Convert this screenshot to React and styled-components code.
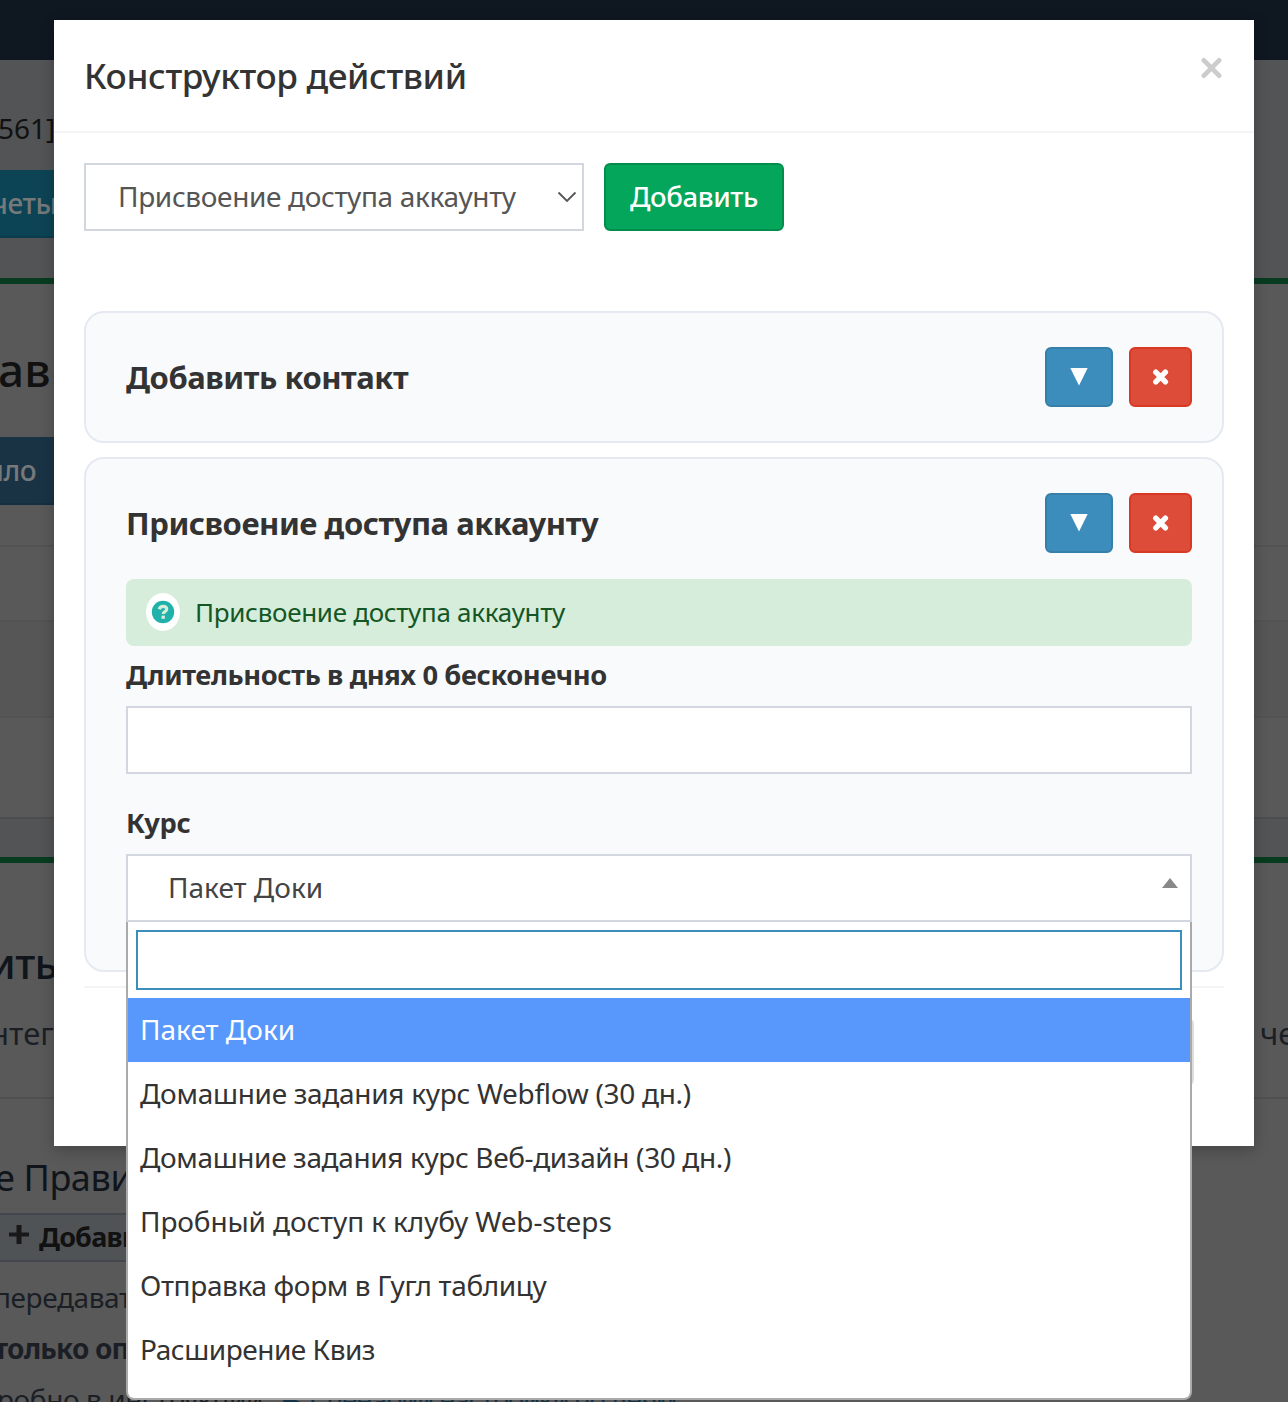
import React, { useState } from "react";
import styled, { createGlobalStyle, css } from "styled-components";

const courses = [
  { name: "Пакет Доки", spacing: 0 },
  { name: "Домашние задания курс Webflow (30 дн.)", spacing: -0.3 },
  { name: "Домашние задания курс Веб-дизайн (30 дн.)", spacing: -0.37 },
  { name: "Пробный доступ к клубу Web-steps", spacing: -0.12 },
  { name: "Отправка форм в Гугл таблицу", spacing: -0.36 },
  { name: "Расширение Квиз", spacing: -0.47 },
];

const CrossIcon = () => (
  <svg width="18" height="18" viewBox="0 0 18 18">
    <path
      d="M3.8 4.2L13.4 13.8M13.4 4.2L3.8 13.8"
      stroke="#fff"
      strokeWidth="5.4"
      strokeLinecap="round"
    />
  </svg>
);

const TriangleIcon = () => (
  <svg width="18" height="18" viewBox="0 0 18 18">
    <path d="M0.3 0H17.7L9 17.6Z" fill="#fff" />
  </svg>
);

const HelpIcon = () => (
  <HelpBadge>
    <svg width="24" height="24" viewBox="0 0 24 24">
      <circle cx="12" cy="12" r="11.2" fill="#20b2aa" />
      <path
        d="M8.2 9.2C8.8 7.3 10.2 6.3 12.1 6.3C14.2 6.3 15.7 7.4 15.7 9.2C15.7 11.8 12.2 11.5 12.2 14"
        fill="none"
        stroke="#d6eddb"
        strokeWidth="3.2"
      />
      <rect x="10.5" y="15.6" width="3.4" height="3.2" fill="#d6eddb" />
    </svg>
  </HelpBadge>
);

const Background = () => (
  <Page>
    <TopBar />
    <PageHead>
      <AccountId>561]</AccountId>
      <PageButton $reports>четы</PageButton>
    </PageHead>
    <RulesBox>
      <RulesTitle>ав</RulesTitle>
      <PageButton>ило</PageButton>
      <TableRow $height={75} $first />
      <TableRow $height={96} $striped />
      <TableRow $height={101} />
    </RulesBox>
    <SettingsBox>
      <SettingsTitle>ить</SettingsTitle>
      <SettingsLine>
        <span>нтег</span>
        <span>че</span>
      </SettingsLine>
      <SectionTitle>е Прави</SectionTitle>
      <AddBar>
        <svg width="22" height="22" viewBox="0 0 22 22">
          <path d="M8.5 1h5v7.5H21v4h-7.5V20h-5v-7.5H1v-4h7.5z" fill="#181818" />
        </svg>
        Добави
      </AddBar>
      <Note>передавать</Note>
      <Note $bold>только оп</Note>
      <Note $last>
        робно в инструкции <a>► Сценарии настройки по дням</a>
      </Note>
    </SettingsBox>
  </Page>
);

const CardHeader = ({ title }) => (
  <CardHead>
    <CardTitle>{title}</CardTitle>
    <CardActions>
      <ToggleButton type="button">
        <TriangleIcon />
      </ToggleButton>
      <RemoveButton type="button">
        <CrossIcon />
      </RemoveButton>
    </CardActions>
  </CardHead>
);

const CourseSelect = () => {
  const [selected, setSelected] = useState(courses[0].name);

  return (
    <SelectWrap>
      <SelectBox>
        <span>{selected}</span>
        <svg width="16" height="10" viewBox="0 0 16 10">
          <path d="M8 0L16 10H0Z" fill="#888" />
        </svg>
      </SelectBox>
      <Dropdown>
        <SearchInput />
        <OptionList>
          {courses.map((course) => (
            <Option
              key={course.name}
              $active={course.name === selected}
              $spacing={course.spacing}
              onClick={() => setSelected(course.name)}
            >
              {course.name}
            </Option>
          ))}
        </OptionList>
      </Dropdown>
    </SelectWrap>
  );
};

const App = () => {
  return (
    <Screen>
      <GlobalStyle />
      <Background />
      <Modal>
        <ModalHeader>
          <ModalTitle>Конструктор действий</ModalTitle>
          <CloseButton type="button">
            <svg width="22" height="22" viewBox="0 0 22 22">
              <path
                d="M3.9 3.4L19.1 18.6M19.1 3.4L3.9 18.6"
                stroke="#ccc"
                strokeWidth="4.8"
                strokeLinecap="round"
              />
            </svg>
          </CloseButton>
        </ModalHeader>
        <ModalBody>
          <AddRow>
            <ActionSelect>
              <span>Присвоение доступа аккаунту</span>
              <svg width="20" height="12" viewBox="0 0 20 12">
                <path d="M1.5 1.5L10 10L18.5 1.5" fill="none" stroke="#555" strokeWidth="1.8" />
              </svg>
            </ActionSelect>
            <AddButton type="button">Добавить</AddButton>
          </AddRow>
          <Card>
            <CardHeader title="Добавить контакт" />
          </Card>
          <Card $open>
            <CardHeader title="Присвоение доступа аккаунту" />
            <Alert>
              <HelpIcon />
              <span>Присвоение доступа аккаунту</span>
            </Alert>
            <Label>Длительность в днях 0 бесконечно</Label>
            <Input />
            <Label $second>Курс</Label>
            <CourseSelect />
          </Card>
        </ModalBody>
        <ModalFooter>
          <FooterButton type="button" aria-label="Close" />
        </ModalFooter>
      </Modal>
    </Screen>
  );
};

const GlobalStyle = createGlobalStyle`
  * {
    box-sizing: border-box;
  }

  body {
    margin: 0;
    background: #595959;
  }

  button,
  input {
    font-family: inherit;
  }

  svg {
    display: block;
    flex: none;
  }
`;

const Screen = styled.div`
  position: relative;
  width: 1288px;
  height: 1402px;
  overflow: hidden;
  font-family: "Noto Sans", "Open Sans", sans-serif;
  font-size: 28px;
  color: #333;
  white-space: nowrap;
`;

const Page = styled.div`
  display: flex;
  flex-direction: column;
  height: 1402px;
  overflow: hidden;
  background: #525456;
`;

const TopBar = styled.div`
  flex: none;
  height: 60px;
  background: #0f1721;
`;

const PageHead = styled.div`
  flex: none;
  display: flex;
  flex-direction: column;
  height: 218px;
  padding-top: 47px;
`;

const AccountId = styled.div`
  height: 63px;
  line-height: 42px;
  color: #111;
  margin-left: -2px;
`;

const PageButton = styled.div`
  flex: none;
  width: 120px;
  height: 68px;
  line-height: 66px;
  margin-left: ${(props) => (props.$reports ? "-9px" : "-14px")};
  background: ${(props) => (props.$reports ? "#0d4455" : "#193345")};
  border-bottom: 2px solid ${(props) => (props.$reports ? "#0b3c4c" : "#162e3f")};
  color: #76797a;
  font-weight: 500;
  letter-spacing: -0.4px;
`;

const RulesBox = styled.div`
  flex: none;
  height: 541px;
  border-top: 6px solid #083c21;
  border-bottom: 2px solid #4c4d4e;
  background: #595959;
  overflow: hidden;
`;

const RulesTitle = styled.div`
  height: 153px;
  padding-top: 53px;
  font-size: 46px;
  line-height: 64px;
  font-weight: 500;
  color: #111;
  margin-left: -2px;
`;

const TableRow = styled.div`
  height: ${(props) => props.$height}px;
  margin-top: ${(props) => (props.$first ? "40px" : "0")};
  border-top: 2px solid #535353;
  background: ${(props) => (props.$striped ? "#565656" : "#595959")};
`;

const SettingsBox = styled.div`
  flex: none;
  height: 545px;
  margin-top: 38px;
  border-top: 6px solid #083c21;
  background: #595959;
  color: #1b1f25;
`;

const SettingsTitle = styled.div`
  height: 137px;
  padding-top: 66px;
  font-size: 42px;
  line-height: 68px;
  font-weight: 500;
  letter-spacing: -0.6px;
  color: #10141b;
  margin-left: -11px;
`;

const SettingsLine = styled.div`
  display: flex;
  justify-content: space-between;
  height: 99px;
  padding-top: 11px;
  border-bottom: 2px solid #4f5151;
  font-size: 31px;
  line-height: 44px;

  span:first-child {
    margin-left: -10px;
  }

  span:last-child {
    width: 28px;
  }
`;

const SectionTitle = styled.div`
  height: 114px;
  padding-top: 54px;
  font-size: 36px;
  line-height: 50px;
  color: #10141b;
  margin-left: -5px;
  letter-spacing: -0.4px;
`;

const AddBar = styled.div`
  display: flex;
  align-items: center;
  gap: 9px;
  width: 1000px;
  height: 49px;
  padding: 0 0 3px 8px;
  border: solid #43464c;
  border-width: 2px 0;
  background: #505356;
  font-size: 27px;
  font-weight: 700;
  letter-spacing: -0.8px;
  color: #111;

  svg {
    margin-bottom: 3px;
  }
`;

const Note = styled.div`
  height: 51px;
  line-height: 38px;
  padding-top: 16px;
  margin-left: ${(props) => (props.$last ? "-3px" : "-6px")};
  font-weight: ${(props) => (props.$bold ? 700 : 400)};
  letter-spacing: ${(props) => (props.$bold ? "-0.8px" : "-0.4px")};

  a {
    color: #143145;
    margin-left: 8px;
    letter-spacing: -1.5px;
  }
`;

/* the dialog floats over the dimmed page */
const Modal = styled.div`
  position: absolute;
  top: 20px;
  left: 54px;
  width: 1200px;
  height: 1126px;
  background: #fff;
  box-shadow: 0 4px 14px rgba(0, 0, 0, 0.24);
`;

const ModalHeader = styled.div`
  display: flex;
  justify-content: space-between;
  height: 113px;
  padding: 30px 32px 0 30px;
  border-bottom: 2px solid #f4f4f4;
`;

const ModalTitle = styled.div`
  font-size: 35.2px;
  line-height: 50px;
  font-weight: 500;
  letter-spacing: -0.37px;
`;

const CloseButton = styled.button`
  height: 22px;
  margin-top: 7px;
  padding: 0;
  border: none;
  background: none;
  cursor: pointer;
`;

const ModalBody = styled.div`
  padding: 30px 30px 0;
`;

const AddRow = styled.div`
  display: flex;
  gap: 20px;
  margin-bottom: 80px;
`;

const ActionSelect = styled.div`
  display: flex;
  justify-content: space-between;
  align-items: center;
  width: 500px;
  height: 68px;
  padding: 0 5px 0 32px;
  border: 2px solid #d2d6de;
  color: #555;
  letter-spacing: -0.35px;

  span {
    padding-bottom: 2px;
  }
`;

const buttonStyle = css`
  display: flex;
  justify-content: center;
  align-items: center;
  padding: 0;
  border-radius: 6px;
  color: #fff;
  cursor: pointer;
`;

const AddButton = styled.button`
  ${buttonStyle}
  width: 180px;
  height: 68px;
  padding-bottom: 2px;
  font-size: 27.5px;
  font-weight: 500;
  letter-spacing: -0.35px;
  background: #03a65a;
  border: 2px solid #028d4c;
`;

const Card = styled.div`
  height: ${(props) => (props.$open ? "515px" : "132px")};
  margin-bottom: 14px;
  padding: 34px 30px 34px 40px;
  border: 2px solid #e5e9f2;
  border-radius: 20px;
  background: #f9fafc;
`;

const CardHead = styled.div`
  display: flex;
  justify-content: space-between;
  align-items: center;
  height: 60px;
`;

const CardTitle = styled.div`
  padding-bottom: 1px;
  font-size: 31px;
  font-weight: 700;
  letter-spacing: -0.46px;
`;

const CardActions = styled.div`
  display: flex;
  gap: 16px;
`;

const ToggleButton = styled.button`
  ${buttonStyle}
  width: 68px;
  height: 60px;
  background: #3c8dbc;
  border: 2px solid #367fa9;
`;

const RemoveButton = styled.button`
  ${buttonStyle}
  width: 63px;
  height: 60px;
  background: #dd4b39;
  border: 2px solid #d73925;
`;

const Alert = styled.div`
  display: flex;
  align-items: center;
  gap: 15px;
  height: 67px;
  margin-top: 26px;
  padding: 0 0 2px 20px;
  border-radius: 8px;
  background: #d6eddb;
  color: #155724;
  font-size: 26px;
  letter-spacing: -0.3px;
`;

const HelpBadge = styled.span`
  display: flex;
  align-items: center;
  justify-content: center;
  width: 34px;
  height: 38px;
  border-radius: 50%;
  background: #fff;
`;

const Label = styled.label`
  display: block;
  height: 40px;
  margin-top: ${(props) => (props.$second ? "30px" : "10px")};
  margin-bottom: 10px;
  line-height: 38px;
  font-size: 27.3px;
  font-weight: 700;
  letter-spacing: -0.39px;
`;

const Input = styled.input`
  display: block;
  width: 100%;
  height: 68px;
  border: 2px solid #d2d6de;
  background: #fff;
`;

const SelectWrap = styled.div`
  position: relative;
`;

const SelectBox = styled.div`
  display: flex;
  justify-content: space-between;
  align-items: center;
  height: 68px;
  padding: 0 12px 0 40px;
  border: 2px solid #d2d6de;
  background: #fff;
  color: #444;

  span {
    padding-bottom: 2px;
  }

  svg {
    margin-bottom: 10px;
  }
`;

const Dropdown = styled.div`
  position: absolute;
  top: 68px;
  left: 0;
  right: 0;
  height: 478px;
  padding-top: 8px;
  border: 2px solid #aaa;
  border-top: none;
  border-radius: 0 0 8px 8px;
  background: #fff;
`;

const SearchInput = styled.input`
  display: block;
  width: calc(100% - 16px);
  height: 60px;
  margin: 0 8px 8px;
  border: 2px solid #3c8dbc;
  outline: none;
`;

const OptionList = styled.ul`
  margin: 0;
  padding: 0;
  list-style: none;
`;

const Option = styled.li`
  height: 64px;
  padding-left: 12px;
  line-height: 62px;
  cursor: pointer;
  letter-spacing: ${(props) => props.$spacing}px;
  background: ${(props) => (props.$active ? "#5897fb" : "#fff")};
  color: ${(props) => (props.$active ? "#fff" : "#333")};
`;

const ModalFooter = styled.div`
  display: flex;
  justify-content: flex-end;
  margin: 0 30px;
  padding: 30px 30px 0;
  border-top: 2px solid #f4f4f4;
`;

const FooterButton = styled.button`
  width: 130px;
  height: 68px;
  border: 2px solid #ddd;
  border-radius: 6px;
  background: #f4f4f4;
`;

export default App;
